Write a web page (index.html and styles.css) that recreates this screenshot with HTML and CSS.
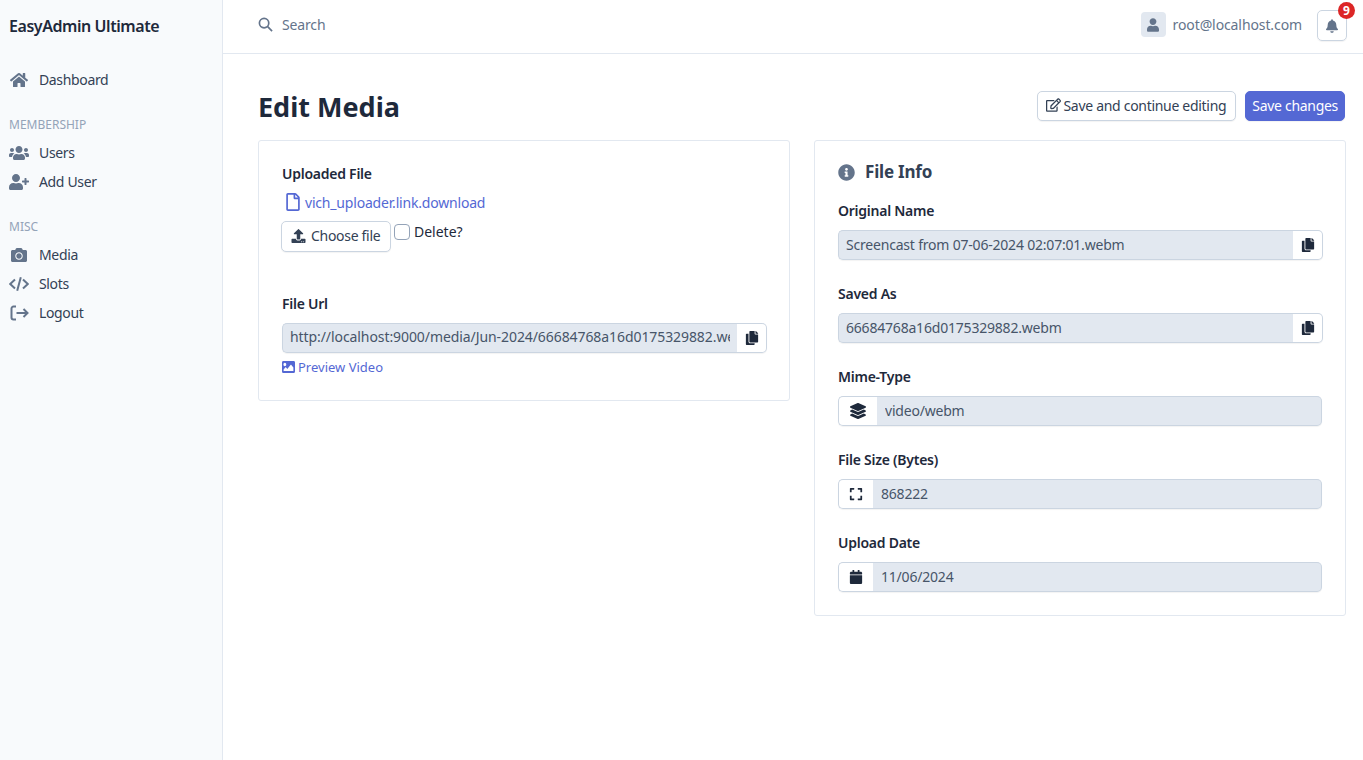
FILE: index.html
```html
<!DOCTYPE html>
<html lang="en">
<head>
    <meta charset="UTF-8">
    <title>Edit Media</title>
    <link rel="stylesheet" href="styles.css">
</head>
<body>
<svg class="defs" width="0" height="0">
    <symbol id="i-copy" viewBox="0 0 448 512"><path d="M320 448v40c0 13.255-10.745 24-24 24H24c-13.255 0-24-10.745-24-24V120c0-13.255 10.745-24 24-24h72v296c0 30.879 25.121 56 56 56h168zm0-344V0H152c-13.255 0-24 10.745-24 24v368c0 13.255 10.745 24 24 24h272c13.255 0 24-10.745 24-24V128H344c-13.2 0-24-10.8-24-24zm120.971-31.029L375.029 7.029A24 24 0 0 0 358.059 0H352v96h96v-6.059a24 24 0 0 0-7.029-16.97z"/></symbol>
</svg>

<aside class="sidebar">
    <div class="brand">EasyAdmin Ultimate</div>
    <nav class="menu">
        <a class="menu-item"><svg class="menu-icon" viewBox="0 0 576 512"><path d="M280.37 148.26L96 300.11V464a16 16 0 0 0 16 16l112.06-.29a16 16 0 0 0 15.92-16V368a16 16 0 0 1 16-16h64a16 16 0 0 1 16 16v95.64a16 16 0 0 0 16 16.05L464 480a16 16 0 0 0 16-16V300L295.67 148.26a12.19 12.19 0 0 0-15.3 0zM571.6 251.47L488 182.56V44.05a12 12 0 0 0-12-12h-56a12 12 0 0 0-12 12v72.61L318.47 43a48 48 0 0 0-61 0L4.34 251.47a12 12 0 0 0-1.6 16.9l25.5 31A12 12 0 0 0 45.15 301l235.22-193.74a12.19 12.19 0 0 1 15.3 0L530.9 301a12 12 0 0 0 16.9-1.6l25.5-31a12 12 0 0 0-1.7-16.93z"/></svg>Dashboard</a>

        <div class="menu-header">MEMBERSHIP</div>
        <a class="menu-item"><svg class="menu-icon" viewBox="0 0 640 512"><path d="M96 224c35.3 0 64-28.7 64-64s-28.7-64-64-64-64 28.7-64 64 28.7 64 64 64zm448 0c35.3 0 64-28.7 64-64s-28.7-64-64-64-64 28.7-64 64 28.7 64 64 64zm32 32h-64c-17.6 0-33.5 7.1-45.1 18.6 40.3 22.1 68.9 62 75.1 109.4h66c17.7 0 32-14.3 32-32v-32c0-35.3-28.7-64-64-64zm-256 0c61.9 0 112-50.1 112-112S381.9 32 320 32 208 82.1 208 144s50.1 112 112 112zm76.8 32h-8.3c-20.8 10-43.9 16-68.5 16s-47.6-6-68.5-16h-8.3C179.6 288 128 339.6 128 403.2V432c0 26.5 21.5 48 48 48h288c26.5 0 48-21.5 48-48v-28.8c0-63.6-51.6-115.2-115.2-115.2zm-223.7-13.4C161.5 263.1 145.6 256 128 256H64c-35.3 0-64 28.7-64 64v32c0 17.7 14.3 32 32 32h65.9c6.3-47.4 34.9-87.3 75.2-109.4z"/></svg>Users</a>
        <a class="menu-item"><svg class="menu-icon" viewBox="0 0 640 512"><path d="M624 208h-64v-64c0-8.8-7.2-16-16-16h-32c-8.8 0-16 7.2-16 16v64h-64c-8.8 0-16 7.2-16 16v32c0 8.8 7.2 16 16 16h64v64c0 8.8 7.2 16 16 16h32c8.8 0 16-7.2 16-16v-64h64c8.8 0 16-7.2 16-16v-32c0-8.8-7.2-16-16-16zm-400 48c70.7 0 128-57.3 128-128S294.7 0 224 0 96 57.3 96 128s57.3 128 128 128zm89.6 32h-16.7c-22.2 10.2-46.9 16-72.9 16s-50.6-5.8-72.9-16h-16.7C60.2 288 0 348.2 0 422.4V464c0 26.5 21.5 48 48 48h352c26.5 0 48-21.5 48-48v-41.6c0-74.2-60.2-134.4-134.4-134.4z"/></svg>Add User</a>

        <div class="menu-header">MISC</div>
        <a class="menu-item"><svg class="menu-icon" viewBox="0 0 512 512"><path d="M512 144v288c0 26.5-21.5 48-48 48H48c-26.5 0-48-21.5-48-48V144c0-26.5 21.5-48 48-48h88l12.3-32.9c7-18.7 24.9-31.1 44.9-31.1h125.5c20 0 37.9 12.4 44.9 31.1L376 96h88c26.5 0 48 21.5 48 48zM376 288c0-66.2-53.8-120-120-120s-120 53.8-120 120 53.8 120 120 120 120-53.8 120-120zm-32 0c0 48.5-39.5 88-88 88s-88-39.5-88-88 39.5-88 88-88 88 39.5 88 88z"/></svg>Media</a>
        <a class="menu-item"><svg class="menu-icon line" viewBox="0 0 20 20"><path d="M6 5.500L1.200 10 6 14.500M14 5.500l4.800 4.500L14 14.500M11.800 3.200L8.200 16.800"/></svg>Slots</a>
        <a class="menu-item"><svg class="menu-icon line" viewBox="0 0 20 20"><path d="M7 3.500H4.500A2 2 0 0 0 2.500 5.500v9a2 2 0 0 0 2 2H7M7.500 10h11M14.500 6l4 4-4 4"/></svg>Logout</a>
    </nav>
</aside>

<div class="main">
    <header class="topbar">
        <div class="search">
            <svg class="search-icon" viewBox="0 0 16 16"><circle cx="6.500" cy="6.500" r="5"/><path d="M10.300 10.300l4.700 4.700"/></svg>
            <span>Search</span>
        </div>
        <div class="user">
            <span class="avatar"><svg viewBox="0 0 448 512"><path d="M224 256c70.700 0 128-57.300 128-128S294.700 0 224 0 96 57.300 96 128s57.300 128 128 128zm89.600 32h-16.700c-22.200 10.200-46.900 16-72.900 16s-50.600-5.800-72.900-16h-16.700C60.200 288 0 348.200 0 422.400V464c0 26.500 21.500 48 48 48h352c26.500 0 48-21.500 48-48v-41.600c0-74.200-60.200-134.400-134.400-134.400z"/></svg></span>
            <span class="user-name">root@localhost.com</span>
        </div>
        <div class="bell">
            <svg viewBox="0 0 448 512"><path d="M224 512c35.320 0 63.970-28.650 63.970-64H160.030c0 35.350 28.650 64 63.970 64zm215.390-149.710c-19.320-20.760-55.470-51.990-55.470-154.290 0-77.700-54.480-139.900-127.940-155.160V32c0-17.670-14.320-32-31.980-32s-31.980 14.330-31.980 32v20.840C118.560 68.100 64.080 130.300 64.080 208c0 102.300-36.150 133.530-55.470 154.290-6 6.450-8.660 14.160-8.610 21.710.11 16.400 12.980 32 32.100 32h383.800c19.120 0 32-15.600 32.100-32 .05-7.550-2.610-15.270-8.610-21.710z"/></svg>
            <span class="badge">9</span>
        </div>
    </header>

    <main class="content">
        <div class="page-head">
            <h1>Edit Media</h1>
            <div class="actions">
                <button class="btn"><svg class="btn-icon" viewBox="0 0 576 512"><path d="M402.300 344.900l32-32c5-5 13.700-1.500 13.700 5.700V464c0 26.500-21.500 48-48 48H48c-26.500 0-48-21.500-48-48V112c0-26.500 21.500-48 48-48h273.500c7.100 0 10.700 8.600 5.700 13.700l-32 32c-1.500 1.500-3.500 2.300-5.700 2.300H48v352h352V350.500c0-2.100.8-4.100 2.300-5.600zm156.600-201.800L296.300 405.700l-90.400 10c-26.200 2.900-48.500-19.200-45.600-45.600l10-90.400L432.900 17.100c22.900-22.900 59.900-22.900 82.700 0l43.200 43.200c22.900 22.900 22.900 60 .1 82.800zM460.100 174L402 115.900 216.200 301.800l-7.300 65.300 65.300-7.300L460.100 174zm64.800-79.700l-43.200-43.200c-4.100-4.100-10.800-4.100-14.800 0L436 82l58.100 58.100 30.900-30.900c4-4.200 4-10.800-.1-14.900z"/></svg>Save and continue editing</button>
                <button class="btn btn-primary">Save changes</button>
            </div>
        </div>

        <div class="columns">
            <section class="card card-left">
                <div class="label">Uploaded File</div>
                <a class="file-link"><svg viewBox="0 0 384 512"><path d="M369.900 97.900L286 14C277 5 264.800-.1 252.100-.1H48C21.500 0 0 21.500 0 48v416c0 26.500 21.500 48 48 48h288c26.500 0 48-21.500 48-48V131.900c0-12.700-5.100-25-14.100-34zM332.100 128H256V51.900l76.100 76.100zM48 464V48h160v104c0 13.300 10.700 24 24 24h104v288H48z"/></svg>vich_uploader.link.download</a>
                <div class="file-row">
                    <button class="btn btn-file"><svg class="btn-icon" viewBox="0 0 512 512"><path d="M296 384h-80c-13.300 0-24-10.700-24-24V192h-87.700c-17.800 0-26.700-21.500-14.100-34.100L242.300 5.700c7.500-7.500 19.800-7.500 27.300 0l152.200 152.200c12.600 12.600 3.700 34.100-14.100 34.100H320v168c0 13.300-10.700 24-24 24zm216-8v112c0 13.300-10.700 24-24 24H24c-13.300 0-24-10.700-24-24V376c0-13.300 10.700-24 24-24h136v8c0 30.900 25.100 56 56 56h80c30.900 0 56-25.100 56-56v-8h136c13.300 0 24 10.700 24 24zm-124 88c0-11-9-20-20-20s-20 9-20 20 9 20 20 20 20-9 20-20zm64 0c0-11-9-20-20-20s-20 9-20 20 9 20 20 20 20-9 20-20z"/></svg>Choose file</button>
                    <span class="check"></span>
                    <span class="check-label">Delete?</span>
                </div>

                <div class="label url-label">File Url</div>
                <div class="input-group">
                    <div class="input input-url">http://localhost:9000/media/Jun-2024/66684768a16d0175329882.webm</div>
                    <span class="addon addon-right"><svg><use href="#i-copy"/></svg></span>
                </div>
                <a class="preview-link"><svg viewBox="0 64 512 384" preserveAspectRatio="none"><path d="M464 448H48c-26.510 0-48-21.490-48-48V112c0-26.510 21.490-48 48-48h416c26.510 0 48 21.490 48 48v288c0 26.510-21.490 48-48 48zM112 120c-30.928 0-56 25.072-56 56s25.072 56 56 56 56-25.072 56-56-25.072-56-56-56zM64 384h384V272l-87.515-87.515c-4.686-4.686-12.284-4.686-16.971 0L208 320l-55.515-55.515c-4.686-4.686-12.284-4.686-16.971 0L64 336v48z"/></svg>Preview Video</a>
            </section>

            <section class="card card-right">
                <h2 class="card-title"><svg viewBox="0 0 512 512"><path d="M256 8C119.043 8 8 119.083 8 256c0 136.997 111.043 248 248 248s248-111.003 248-248C504 119.083 392.957 8 256 8zm0 110c23.196 0 42 18.804 42 42s-18.804 42-42 42-42-18.804-42-42 18.804-42 42-42zm56 254c0 6.627-5.373 12-12 12h-88c-6.627 0-12-5.373-12-12v-24c0-6.627 5.373-12 12-12h12v-64h-12c-6.627 0-12-5.373-12-12v-24c0-6.627 5.373-12 12-12h64c6.627 0 12 5.373 12 12v100h12c6.627 0 12 5.373 12 12v24z"/></svg>File Info</h2>

                <div class="field">
                    <div class="label">Original Name</div>
                    <div class="input-group">
                        <div class="input">Screencast from 07-06-2024 02:07:01.webm</div>
                        <span class="addon addon-right"><svg><use href="#i-copy"/></svg></span>
                    </div>
                </div>
                <div class="field">
                    <div class="label">Saved As</div>
                    <div class="input-group">
                        <div class="input">66684768a16d0175329882.webm</div>
                        <span class="addon addon-right"><svg><use href="#i-copy"/></svg></span>
                    </div>
                </div>
                <div class="field">
                    <div class="label">Mime-Type</div>
                    <div class="input-group short">
                        <span class="addon addon-left wide"><svg viewBox="0 0 512 512"><path d="M12.410 148.020l232.940 105.670c6.800 3.090 14.490 3.090 21.290 0l232.940-105.670c16.550-7.510 16.550-32.520 0-40.030L266.650 2.310a25.607 25.607 0 0 0-21.290 0L12.410 107.980c-16.550 7.510-16.550 32.530 0 40.040zm487.180 88.280l-58.090-26.330-161.640 73.270c-7.560 3.430-15.590 5.170-23.860 5.170s-16.290-1.740-23.860-5.170L70.510 209.970l-58.100 26.330c-16.550 7.500-16.550 32.500 0 40l232.940 105.590c6.800 3.080 14.490 3.080 21.290 0L499.590 276.300c16.550-7.500 16.550-32.500 0-40zm0 127.800l-57.870-26.230-161.860 73.370c-7.560 3.430-15.590 5.170-23.860 5.170s-16.290-1.740-23.860-5.170L70.290 337.870 12.410 364.100c-16.550 7.500-16.550 32.500 0 40l232.940 105.590c6.800 3.080 14.490 3.080 21.290 0L499.590 404.100c16.550-7.500 16.550-32.500 0-40z"/></svg></span>
                        <div class="input">video/webm</div>
                    </div>
                </div>
                <div class="field">
                    <div class="label">File Size (Bytes)</div>
                    <div class="input-group short">
                        <span class="addon addon-left"><svg viewBox="0 0 448 512"><path d="M0 180V56c0-13.300 10.700-24 24-24h124c6.600 0 12 5.400 12 12v40c0 6.600-5.400 12-12 12H64v84c0 6.600-5.400 12-12 12H12c-6.600 0-12-5.400-12-12zM288 44v40c0 6.600 5.400 12 12 12h84v84c0 6.600 5.400 12 12 12h40c6.600 0 12-5.400 12-12V56c0-13.300-10.700-24-24-24H300c-6.600 0-12 5.400-12 12zm148 276h-40c-6.600 0-12 5.400-12 12v84h-84c-6.600 0-12 5.400-12 12v40c0 6.600 5.400 12 12 12h124c13.300 0 24-10.700 24-24V332c0-6.600-5.400-12-12-12zM160 468v-40c0-6.600-5.400-12-12-12H64v-84c0-6.600-5.400-12-12-12H12c-6.600 0-12 5.400-12 12v124c0 13.300 10.700 24 24 24h124c6.600 0 12-5.400 12-12z"/></svg></span>
                        <div class="input">868222</div>
                    </div>
                </div>
                <div class="field">
                    <div class="label">Upload Date</div>
                    <div class="input-group short">
                        <span class="addon addon-left"><svg viewBox="0 0 448 512"><path d="M12 192h424c6.600 0 12 5.400 12 12v260c0 26.500-21.500 48-48 48H48c-26.500 0-48-21.500-48-48V204c0-6.600 5.400-12 12-12zm436-44v-36c0-26.500-21.500-48-48-48h-48V12c0-6.600-5.400-12-12-12h-40c-6.600 0-12 5.400-12 12v52H160V12c0-6.600-5.400-12-12-12h-40c-6.600 0-12 5.400-12 12v52H48C21.500 64 0 85.500 0 112v36c0 6.600 5.400 12 12 12h424c6.600 0 12-5.400 12-12z"/></svg></span>
                        <div class="input">11/06/2024</div>
                    </div>
                </div>
            </section>
        </div>
    </main>
</div>
</body>
</html>
```

FILE: styles.css
```css
* {
    box-sizing: border-box;
}
body {
    margin: 0;
    height: 760px;
    overflow: hidden;
    display: flex;
    font-family: "Noto Sans", sans-serif;
    font-size: 14px;
    color: #334155;
    background-color: #fff;
}
.defs {
    position: absolute;
}
svg {
    fill: currentColor;
}

/* sidebar */
.sidebar {
    width: 223px;
    flex-shrink: 0;
    background-color: #f8fafc;
    border-right: 1px solid #e2e8f0;
    padding-left: 9px;
}
.brand {
    height: 53px;
    line-height: 52px;
    font-size: 16px;
    font-weight: 600;
    letter-spacing: -0.44px;
    color: #1e293b;
}
.menu {
    padding-top: 12px;
}
.menu-item {
    display: flex;
    align-items: center;
    height: 29px;
    letter-spacing: -0.35px;
    color: #334155;
}
.menu-icon {
    width: 20px;
    height: 16px;
    margin-right: 10px;
    fill: #64748b;
}
.menu-icon.line {
    height: 20px;
    fill: none;
    stroke: #64748b;
    stroke-width: 2;
}
.menu-header {
    margin-top: 17px;
    height: 27px;
    line-height: 28px;
    font-size: 12px;
    color: #94a3b8;
}

/* topbar */
.main {
    flex: 1;
    min-width: 0;
}
.topbar {
    height: 54px;
    display: flex;
    align-items: center;
    padding: 0 16px 2px 35px;
    border-bottom: 1px solid #e2e8f0;
}
.search {
    flex: 1;
    display: flex;
    align-items: center;
    margin-bottom: 2px;
    letter-spacing: -0.15px;
    color: #64748b;
}
.search-icon {
    width: 15px;
    height: 15px;
    margin-right: 9px;
    fill: none;
    stroke: #64748b;
    stroke-width: 1.800;
}
.user {
    display: flex;
    align-items: center;
    margin-bottom: 2px;
    letter-spacing: -0.1px;
    color: #64748b;
}
.avatar {
    width: 25px;
    height: 25px;
    margin-right: 7px;
    display: flex;
    align-items: center;
    justify-content: center;
    border-radius: 4px;
    background-color: #e2e8f0;
}
.avatar svg {
    width: 12px;
    height: 14px;
    fill: #64748b;
}
.bell {
    position: relative;
    width: 30px;
    height: 31px;
    margin-left: 15px;
    display: flex;
    align-items: center;
    justify-content: center;
    border: 1px solid #cbd5e1;
    border-radius: 5px;
    box-shadow: 0 1px 1px rgba(0, 0, 0, 0.05);
}
.bell svg {
    width: 12px;
    height: 14px;
    fill: #64748b;
}
.badge {
    position: absolute;
    top: -9px;
    right: -9px;
    width: 17px;
    height: 17px;
    border-radius: 50%;
    background-color: #dc2626;
    color: #fff;
    font-size: 12px;
    font-weight: 700;
    line-height: 17px;
    text-align: center;
}

/* page */
.content {
    padding: 37px 17px 0 35px;
}
.page-head {
    display: flex;
    align-items: center;
    justify-content: space-between;
    height: 30px;
    margin-bottom: 19px;
}
h1 {
    margin: 2px 0 0;
    font-size: 27px;
    font-weight: 700;
    line-height: 30px;
    color: #1e293b;
}
.actions {
    display: flex;
    gap: 9px;
    margin-right: 1px;
}
.btn {
    display: inline-flex;
    align-items: center;
    height: 30px;
    padding: 0 9px 2px 8px;
    font-family: inherit;
    font-size: 14px;
    letter-spacing: -0.3px;
    color: #334155;
    background-color: #fff;
    border: 1px solid #cbd5e1;
    border-radius: 5px;
    box-shadow: 0 1px 1px rgba(0, 0, 0, 0.05);
}
.btn-primary {
    padding: 0 6px 2px;
    color: #fff;
    background-color: #5468d4;
    border-color: #5468d4;
}
.btn-icon {
    width: 15px;
    height: 14px;
    margin-right: 2px;
}
.columns {
    display: grid;
    grid-template-columns: 532px 532px;
    gap: 24px;
    align-items: start;
}
.card {
    padding: 23px;
    border: 1px solid #e2e8f0;
    border-radius: 3px;
}
.card-left {
    height: 261px;
}
.card-right {
    height: 476px;
    padding-top: 20px;
}
.label {
    font-weight: 600;
    line-height: 20px;
    letter-spacing: -0.25px;
    color: #1e293b;
}
.file-link {
    display: flex;
    align-items: center;
    margin: 8px 0 0 4px;
    height: 20px;
    letter-spacing: -0.19px;
    color: #5468d4;
}
.file-link svg {
    width: 14px;
    height: 18px;
    margin-right: 5px;
}
.file-row {
    display: flex;
    align-items: flex-start;
    height: 31px;
    margin: 9px 0 0 -1px;
}
.btn-file {
    width: 110px;
    height: 31px;
    padding: 0 0 3px 9px;
    flex-shrink: 0;
}
.btn-file .btn-icon {
    margin-top: 2px;
    margin-right: 5px;
}
.check {
    width: 16px;
    height: 16px;
    margin: 3px 4px 0 3px;
    background-color: #fff;
    border: 1px solid #94a3b8;
    border-radius: 4px;
}
.check-label {
    margin-top: 1px;
    line-height: 20px;
    color: #1e293b;
}
.url-label {
    margin-top: 42px;
}
.input-group {
    display: flex;
    height: 30px;
    margin: 9px -1px 0 0;
    border-radius: 5px;
    box-shadow: 0 1px 1px rgba(0, 0, 0, 0.05);
}
.input-group.short {
    margin-right: 0;
}
.input {
    flex: 1;
    min-width: 0;
    padding: 0 7px;
    line-height: 28px;
    white-space: nowrap;
    overflow: clip;
    overflow-clip-margin: content-box;
    letter-spacing: -0.2px;
    color: #475569;
    background-color: #e2e8f0;
    border: 1px solid #cbd5e1;
}
.input-url {
    line-height: 26px;
    letter-spacing: -0.08px;
}
.addon {
    display: flex;
    align-items: center;
    justify-content: center;
    flex-shrink: 0;
    background-color: #fff;
    border: 1px solid #cbd5e1;
    color: #1e293b;
}
.addon svg {
    width: 14px;
    height: 14px;
}
.addon-right {
    width: 30px;
    border-left: 0;
    border-radius: 0 5px 5px 0;
}
.addon-left {
    width: 35px;
    border-right: 0;
    border-radius: 5px 0 0 5px;
}
.addon-left.wide {
    width: 39px;
}
.addon-left.wide svg {
    width: 16px;
    height: 16px;
}
.input-group:has(.addon-right) .input {
    border-right: 0;
    border-radius: 5px 0 0 5px;
}
.input-group:has(.addon-left) .input {
    padding-left: 8px;
    border-left: 0;
    border-radius: 0 5px 5px 0;
}
.preview-link {
    display: flex;
    align-items: center;
    margin-top: 5px;
    font-size: 13px;
    color: #5468d4;
}
.preview-link svg {
    width: 13px;
    height: 12px;
    margin-right: 3px;
}
.card-title {
    display: flex;
    align-items: center;
    margin: 0 0 18px;
    font-size: 17px;
    font-weight: 700;
    line-height: 22px;
    letter-spacing: -0.2px;
    color: #334155;
}
.card-title svg {
    width: 17px;
    height: 17px;
    margin-right: 10px;
    fill: #64748b;
}
.field {
    height: 83px;
}
```
